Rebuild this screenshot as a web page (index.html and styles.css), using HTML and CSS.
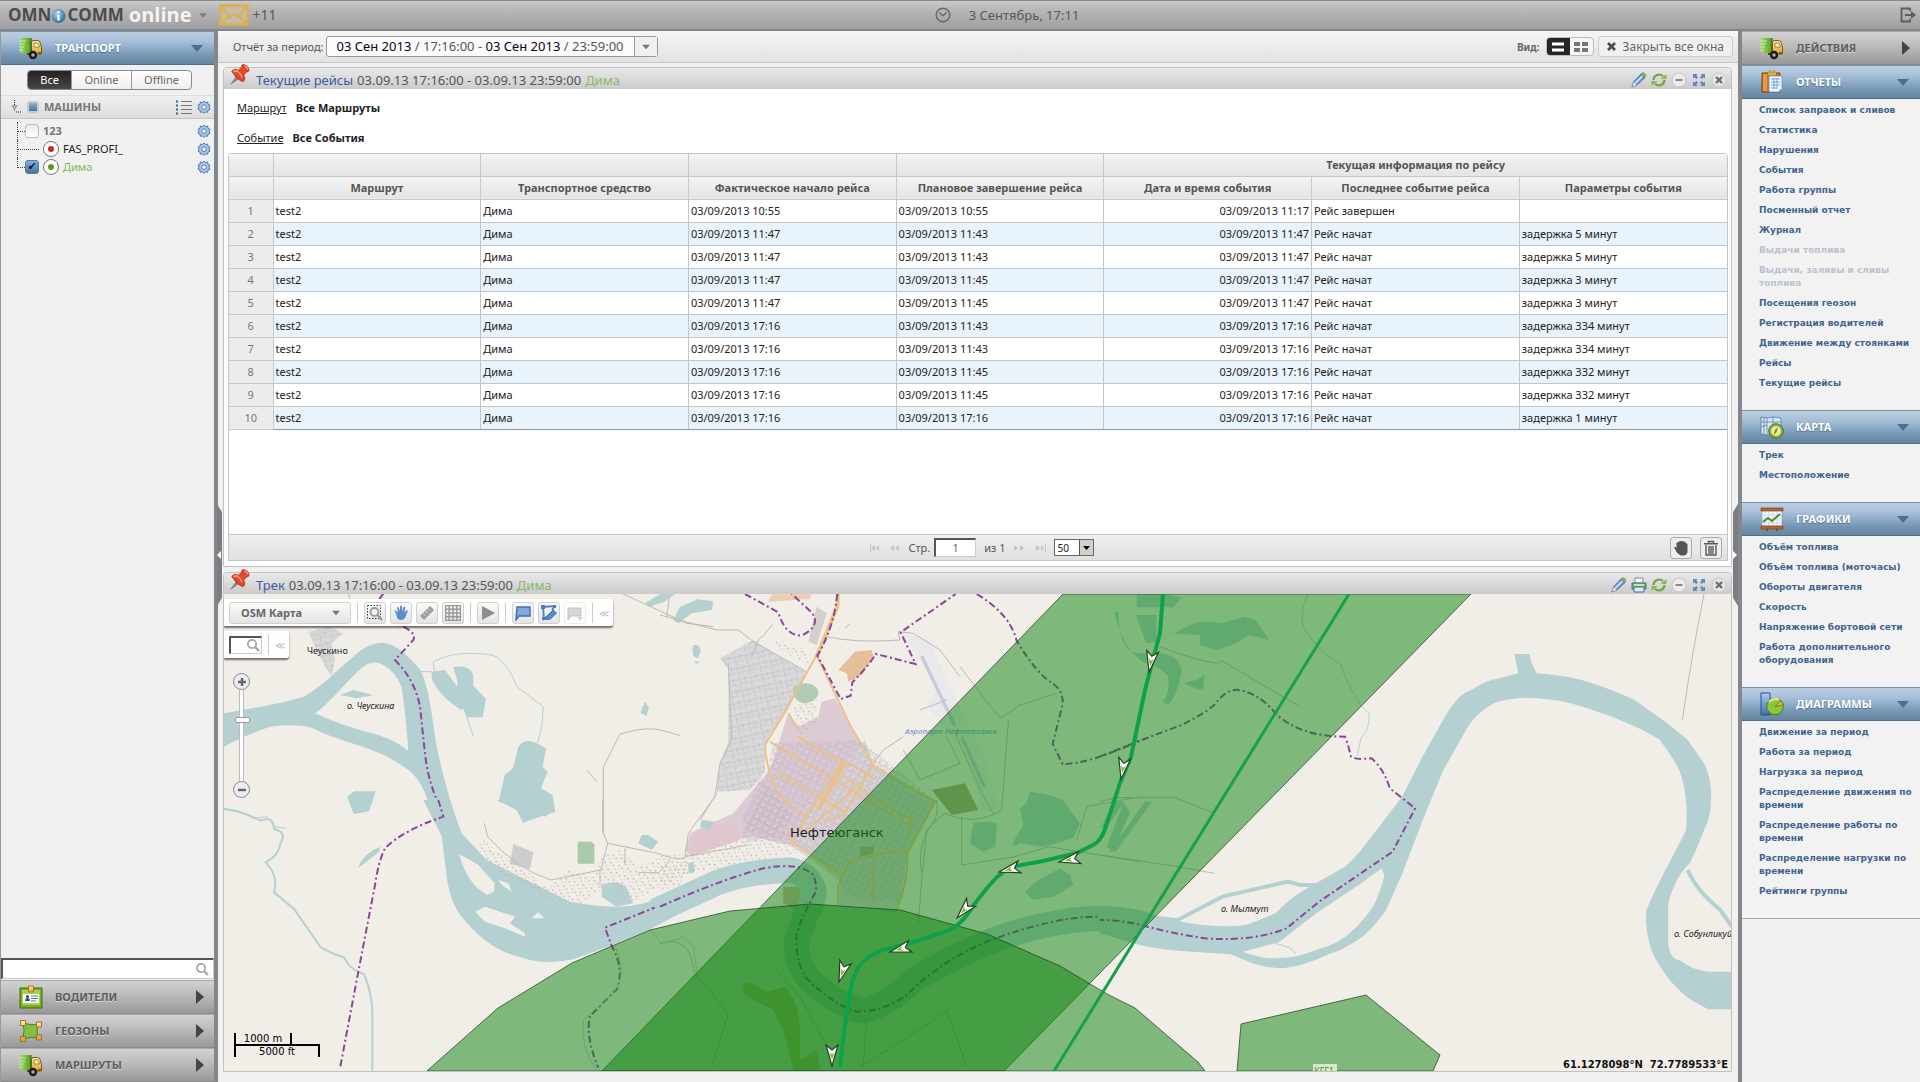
FILE: index.html
```html
<!DOCTYPE html>
<html lang="ru">
<head>
<meta charset="utf-8">
<title>Omnicomm Online</title>
<meta name="viewport" content="width=device-width, initial-scale=1">
<link rel="stylesheet" href="styles.css">
</head>
<body>
<svg class="defs" aria-hidden="true">
  <defs>
    <linearGradient id="gGreen" x1="0" x2="1"><stop offset="0" stop-color="#a5d96c"/><stop offset="1" stop-color="#4f9f22"/></linearGradient>
    <linearGradient id="gGold" x1="0" y1="0" x2="0" y2="1"><stop offset="0" stop-color="#ffe9a0"/><stop offset="1" stop-color="#e0a030"/></linearGradient>
    <linearGradient id="gBlue" x1="0" y1="0" x2="0" y2="1"><stop offset="0" stop-color="#a9cdf2"/><stop offset="1" stop-color="#3e6fae"/></linearGradient>
    <radialGradient id="gGlobe" cx=".4" cy=".35" r=".7"><stop offset="0" stop-color="#a6d4ef"/><stop offset="1" stop-color="#2c6390"/></radialGradient>
    <symbol id="truck" viewBox="0 0 24 24">
      <path d="M1 2h11v15H1z" fill="url(#gGreen)"/><path d="M0 5h7M0 8h6M0 11h5M0 14h4" stroke="#cdeaa8" stroke-width="1"/>
      <path d="M12 2v16" stroke="#2a5c0c" stroke-width="1"/>
      <path d="M12.500 6.500q0-2 2-2h4q2.500 0 3 3l1 4v6.500h-10z" fill="url(#gGold)" stroke="#7a5512"/>
      <path d="M15 7h4l1.500 4H15z" fill="#fff4cf" stroke="#8f6a20" stroke-width=".8"/>
      <path d="M8 18h4" stroke="#5b4313" stroke-width="2"/>
      <circle cx="14" cy="19" r="4.200" fill="#1c1c1c"/><circle cx="14" cy="19" r="1.800" fill="#aaa"/><path d="M19 16h4v2h-4z" fill="#8a5b10"/>
    </symbol>
    <symbol id="clip" viewBox="0 0 24 24">
      <path d="M2 3h18v19H2z" fill="#c5762a" stroke="#7b430f"/><path d="M3 4h4v17H3z" fill="#e39a4d"/>
      <path d="M8 2h8v4H8zM10 0h4v3h-4z" fill="url(#gGold)" stroke="#a8781c" stroke-width=".7"/>
      <path d="M9 6h13v13l-3 3H9z" fill="#eef5fd" stroke="#6a8db8" stroke-width=".8"/><path d="M11 9h9M11 12h9M11 15h9M11 18h6M14 8v11M17 8v11" stroke="#7aa3d4"/><path d="M22 19h-3v3z" fill="#9dbce0"/>
    </symbol>
    <symbol id="mapi" viewBox="0 0 24 24">
      <path d="M1 2l6 1 6-1 8 1v17l-7-1-7 1-6-1z" fill="#d7e6f7" stroke="#54789f" stroke-width=".8"/><path d="M7 3v17M13 2v17M1 7h20M4 2v17M1 12l6-2" stroke="#6d92bb" stroke-width="1"/>
      <circle cx="16" cy="16" r="7.300" fill="#7db52b" stroke="#48780d"/><circle cx="16" cy="16" r="5" fill="#dcebb0"/><path d="M18 12l-1.500 5-3 3 1.500-5z" fill="#c85c24"/>
    </symbol>
    <symbol id="chart" viewBox="0 0 24 24">
      <path d="M2 3h20v16H2z" fill="#f4f8fc" stroke="#8796a5" stroke-width=".6"/><path d="M5 4v15M9 4v15M13 4v15M17 4v15M2 8h20M2 12h20M2 16h20" stroke="#bcd0e4" stroke-width=".7"/>
      <path d="M1 1h22v3H1zM1 19h22v3H1z" fill="#b9662a" stroke="#71380f" stroke-width=".6"/><path d="M3 15l5-4 4 3 8-7" fill="none" stroke="#4c8d1b" stroke-width="2"/><path d="M7 22v2M17 22v2" stroke="#71380f" stroke-width="1.500"/>
    </symbol>
    <symbol id="pie" viewBox="0 0 24 24">
      <path d="M1 1h9v22H1z" fill="url(#gBlue)" stroke="#2b5285"/><circle cx="15" cy="14.500" r="8.300" fill="#8cc63a" stroke="#477a0d"/><path d="M15 14.500l6-5.500a8 8 0 0 1 2 4z" fill="#f7b84a" stroke="#477a0d" stroke-width=".8"/><path d="M9 10q5-5 10-2" stroke="#d3eb9c" fill="none" stroke-width="2"/>
    </symbol>
    <symbol id="badge" viewBox="0 0 24 24">
      <path d="M1 3h22v20H1z" fill="#79ae21" stroke="#3f6a08"/><path d="M3 5h18v15H3z" fill="#a5cf55"/><path d="M4 9h16v9H4z" fill="#fff"/><path d="M6 16q0-3 2.500-3t2.500 3zM8.500 10a1.600 1.600 0 1 1 0 3.200 1.600 1.600 0 1 1 0-3.200" fill="#33507a"/><path d="M12 11h7M12 13.500h7M12 16h5" stroke="#4b74a8"/><path d="M9.500 1h5v6h-5z" fill="url(#gGold)" stroke="#a8781c"/>
    </symbol>
    <symbol id="zone" viewBox="0 0 24 24">
      <path d="M4 4q8 3 16 1-4 7 0 14-8-2-16 1 2-9 0-16z" fill="#86bd45" stroke="#4d8519"/><g fill="url(#gGold)" stroke="#9d6a11" stroke-width=".9"><path d="M1.500 1.500h5v5h-5zM17.500 3h5v5h-5zM1.500 17.500h5v5h-5zM17.500 16h5v5h-5z"/></g>
    </symbol>
    <symbol id="gear" viewBox="0 0 14 14">
      <path d="M7 1l1.500 1.600L10.600 2l.4 2.300 2 1-1 1.900 1 2-2 .9-.4 2.200-2.100-.5L7 13.400l-1.500-1.600-2.200.5-.3-2.200-2-1 1-1.900-1-2 2-1L3.400 2l2.100.6z" fill="#a9c6ea" stroke="#4877b6"/><circle cx="7" cy="7.200" r="2.300" fill="#fff" stroke="#4877b6"/>
    </symbol>
    <symbol id="pin" viewBox="0 0 24 24">
      <path d="M2 22L9 12l3 3z" fill="#8c8c8c" stroke="#666" stroke-width=".6"/><path d="M3 8q4-4 7-1l4-4q-1-2 2-2.500 5 1 6 6-1 3-3 2l-3 4q3 4-1 7Q8 17 3 8z" fill="#e2492b" stroke="#ab2a12" stroke-width=".8"/><path d="M5 8.500q3-2 5 0 3 2 4 6M17 2q3 1 3.500 4" fill="none" stroke="#ff9c80" stroke-width="1.600"/>
    </symbol>
    <symbol id="pencil" viewBox="0 0 16 16"><path d="M1 15l1.500-5L10 2l4 3.500L6 13z" fill="#6e99d8" stroke="#35609e" stroke-width=".8"/><path d="M4 11.500L11.500 4" stroke="#d9e7fa" stroke-width="1.600"/><path d="M10 2l1.500-1.500q2 0 3.500 3L14 5.500z" fill="#8cc04a" stroke="#55852a" stroke-width=".6"/><path d="M1 15l1.500-5L6 13z" fill="#f1f1f1" stroke="#888" stroke-width=".6"/></symbol>
    <symbol id="refresh" viewBox="0 0 16 16"><path d="M2.500 8A5.500 5.500 0 0 1 12 4.300M13.500 8A5.500 5.500 0 0 1 4 11.700" fill="none" stroke="#6fa83c" stroke-width="2.200"/><path d="M9.500 7h6V2zM6.500 9h-6v5z" fill="#84bd48"/></symbol>
    <symbol id="printer" viewBox="0 0 16 16"><path d="M4 1h8v5H4z" fill="#fff" stroke="#6b8bb3"/><path d="M1 6h14v6H1z" fill="#7fb53e" stroke="#466f93"/><path d="M3 10h10v5H3z" fill="#dce9f8" stroke="#3f6ea8"/><path d="M3 8h10" stroke="#eaf6d9" stroke-width="1.400"/></symbol>
    <symbol id="minus" viewBox="0 0 16 16"><circle cx="8" cy="8" r="7" fill="#ececec" stroke="#c4c4c4"/><path d="M4.500 8h7" stroke="#8a8a8a" stroke-width="2"/></symbol>
    <symbol id="expand" viewBox="0 0 16 16"><g fill="#6487b8"><path d="M2 2h4.500L5.200 3.300 7 5.200 5.200 7 3.300 5.200 2 6.500zM14 2v4.500l-1.300-1.300L10.800 7 9 5.200l1.800-1.900L9.500 2zM2 14V9.500l1.300 1.300L5.200 9 7 10.800l-1.800 1.900L6.500 14zM14 14H9.500l1.300-1.300L9 10.800 10.800 9l1.900 1.800L14 9.500z"/></g></symbol>
    <symbol id="cross" viewBox="0 0 16 16"><circle cx="8" cy="8" r="7" fill="#e6e6e6" stroke="#c6c6c6"/><path d="M5 5l6 6M11 5l-6 6" stroke="#6c6c6c" stroke-width="2.400"/></symbol>
    <symbol id="hand" viewBox="0 0 16 16"><path d="M3 8.500L1.500 6q.8-1 2 0L5 8 4 2.500q1-1 1.800.2L7 6.500V1.200q1-1 2 0l.2 5.300L10.500 2q1.200-.8 1.800.3L11.500 8l1.800-2.500q1.400-.5 1.500.7L12 13q-1 2-4 2t-4-2.500z"/></symbol>
    <symbol id="fist" viewBox="0 0 16 16"><path d="M1 7q1.500-1 2.500 1V3q1-1.500 2-.6Q6.500.3 8.200 1.300q1.500-1 2.400.5 1.800-.8 2.100 1.200 2 0 1.800 2V12q-1 3.500-4 3.500h-2.500Q5.500 15 3.500 12z"/></symbol>
    <symbol id="trash" viewBox="0 0 16 16"><path d="M1 3.800h14M5.500 3.500v-2h5v2M3 5v10h10V5M6 6v8M8 6v8M10 6v8" fill="none" stroke="#5a5a5a" stroke-width="1.400"/></symbol>
    <symbol id="lens" viewBox="0 0 14 14"><circle cx="6" cy="6" r="4.200" fill="none" stroke="#a4a4a4" stroke-width="1.700"/><path d="M9 9l4 4" stroke="#a4a4a4" stroke-width="2.300"/></symbol>
    <symbol id="down" viewBox="0 0 12 7"><path d="M0 0h12L6 7z"/></symbol>
    <symbol id="right" viewBox="0 0 8 14"><path d="M0 0l8 7-8 7z" fill="#444"/></symbol>
    <symbol id="arrow" viewBox="-8 -24 16 26" overflow="visible"><path d="M0 0L-6-21l6 5 6-5z" fill="#fff" stroke="#25401f" stroke-width="1.200"/><path d="M0-6l-2.600-7.500L0-11.500l2.600-2z" fill="#7cb83a"/></symbol>
  </defs>
</svg>

<header class="topbar">
  <div class="brand">
    <button class="logo" type="button" aria-label="Omnicomm Online">
      <span class="logo-main">OMN</span><svg width="15" height="17" viewBox="0 0 15 17"><circle cx="7.500" cy="9" r="7" fill="url(#gGlobe)"/><path d="M7.500 4v2M7.500 7.500v6" stroke="#fff" stroke-width="2.200"/></svg><span class="logo-main">COMM</span><span class="logo-sub">online</span>
      <svg class="caret" width="8" height="5"><use href="#down"/></svg>
    </button>
    <a class="mail" href="#mail"><svg width="30" height="22" viewBox="0 0 30 22"><path d="M1.500 1.500h27v19h-27z" fill="#c3bda9" stroke="#deb146" stroke-width="2.400"/><path d="M2 2l9 11 4-3 4 3 9-11M2 20l9-8.500M28 20l-9-8.500" fill="none" stroke="#deb146" stroke-width="1.800"/></svg>+11</a>
  </div>
  <div class="clock"><svg width="16" height="16" viewBox="0 0 16 16" fill="none" stroke="#686868" stroke-width="1.500"><circle cx="8" cy="8" r="6.800"/><path d="M8 9L4.500 5.500M8 9l3.500-3.500"/></svg><time>3 Сентябрь, 17:11</time></div>
  <button class="exit" type="button" aria-label="Выход"><svg width="16" height="16" viewBox="0 0 16 16"><path d="M10 4V1.500H1.500v13H10V12" fill="none" stroke="#5c5c5c" stroke-width="1.800"/><path d="M5 7h6V4l5 4-5 4V9H5z" fill="#5c5c5c"/></svg></button>
</header>

<div class="layout">
  <aside class="left">
    <button class="acc blue" type="button"><svg class="ico"><use href="#truck"/></svg><span>ТРАНСПОРТ</span><svg class="tri"><use href="#down"/></svg></button>
    <div class="segment"><button class="on" type="button">Все</button><button type="button">Online</button><button type="button">Offline</button></div>
    <div class="group">
      <svg width="14" height="14" viewBox="0 0 14 14"><path d="M6.500 0v11M8 12h6" stroke="#222" stroke-dasharray="1 1"/><path d="M3 5h7l-3.500 6z" fill="#aaa"/></svg>
      <input type="checkbox" class="box mid" id="cars"><label for="cars">МАШИНЫ</label>
      <svg class="list" width="16" height="16" viewBox="0 0 16 16"><path d="M5 2.500h11M5 6.500h11M5 10.500h11M5 14.500h11" stroke="#777"/><path d="M0 2.500h2M0 6.500h2M0 10.500h2M0 14.500h2" stroke="#31619c" stroke-width="2"/></svg>
      <svg class="gear"><use href="#gear"/></svg>
    </div>
    <ul class="tree">
      <li><input type="checkbox" class="box" id="c123"><label class="muted" for="c123">123</label><svg class="gear"><use href="#gear"/></svg></li>
      <li class="nobox"><i class="dot red"></i><span>FAS_PROFI_</span><svg class="gear"><use href="#gear"/></svg></li>
      <li class="last"><input type="checkbox" class="box" id="dima" checked><i class="dot green"></i><label class="lime" for="dima">Дима</label><svg class="gear"><use href="#gear"/></svg></li>
    </ul>
    <div class="search"><input type="text" aria-label="Поиск"><svg width="14" height="14"><use href="#lens"/></svg></div>
    <button class="acc gray" type="button"><svg class="ico"><use href="#badge"/></svg><span>ВОДИТЕЛИ</span><svg class="side"><use href="#right"/></svg></button>
    <button class="acc gray" type="button"><svg class="ico"><use href="#zone"/></svg><span>ГЕОЗОНЫ</span><svg class="side"><use href="#right"/></svg></button>
    <button class="acc gray" type="button"><svg class="ico"><use href="#truck"/></svg><span>МАРШРУТЫ</span><svg class="side"><use href="#right"/></svg></button>
  </aside>

  <main class="center">
    <div class="period">
      <span>Отчёт за период:</span>
      <button class="range" type="button"><span class="range-text"><b>03 Сен 2013</b> / 17:16:00 - <b>03 Сен 2013</b> / 23:59:00</span><span class="range-drop"><svg width="8" height="6" fill="#777"><use href="#down"/></svg></span></button>
      <span class="view-label">Вид:</span>
      <div class="view"><button class="on" type="button" aria-label="Строки"><svg width="12" height="10"><path d="M0 2h12M0 8h12" stroke="#fff" stroke-width="3"/></svg></button><button type="button" aria-label="Плитка"><svg width="14" height="10"><path d="M0 2h6M8 2h6M0 8h6M8 8h6" stroke="#777" stroke-width="4"/></svg></button></div>
      <button class="close-all" type="button"><svg width="9" height="9"><path d="M1 1l7 7M8 1L1 8" stroke="#4a4a4a" stroke-width="2.600"/></svg>Закрыть все окна</button>
    </div>

    <section class="win report">
      <h2 class="title"><svg class="pin"><use href="#pin"/></svg><a href="#trips">Текущие рейсы</a><span>03.09.13 17:16:00 - 03.09.13 23:59:00</span><em>Дима</em>
        <span class="tools"><svg><use href="#pencil"/></svg><svg><use href="#refresh"/></svg><svg><use href="#minus"/></svg><svg><use href="#expand"/></svg><svg><use href="#cross"/></svg></span></h2>
      <div class="filters">
        <p><a href="#route">Маршрут</a><b>Все Маршруты</b></p>
        <p><a href="#event">Событие</a><b>Все События</b></p>
      </div>
      <div class="grid">
        <table>
          <colgroup><col class="num"><col><col><col><col><col><col><col></colgroup>
          <thead>
            <tr><th></th><th></th><th></th><th></th><th></th><th colspan="3">Текущая информация по рейсу</th></tr>
            <tr><th></th><th>Маршрут</th><th>Транспортное средство</th><th>Фактическое начало рейса</th><th>Плановое завершение рейса</th><th>Дата и время события</th><th>Последнее событие рейса</th><th>Параметры события</th></tr>
          </thead>
          <tbody>
            <tr><th>1</th><td>test2</td><td>Дима</td><td>03/09/2013 10:55</td><td>03/09/2013 10:55</td><td>03/09/2013 11:17</td><td>Рейс завершен</td><td></td></tr>
            <tr><th>2</th><td>test2</td><td>Дима</td><td>03/09/2013 11:47</td><td>03/09/2013 11:43</td><td>03/09/2013 11:47</td><td>Рейс начат</td><td>задержка 5 минут</td></tr>
            <tr><th>3</th><td>test2</td><td>Дима</td><td>03/09/2013 11:47</td><td>03/09/2013 11:43</td><td>03/09/2013 11:47</td><td>Рейс начат</td><td>задержка 5 минут</td></tr>
            <tr><th>4</th><td>test2</td><td>Дима</td><td>03/09/2013 11:47</td><td>03/09/2013 11:45</td><td>03/09/2013 11:47</td><td>Рейс начат</td><td>задержка 3 минут</td></tr>
            <tr><th>5</th><td>test2</td><td>Дима</td><td>03/09/2013 11:47</td><td>03/09/2013 11:45</td><td>03/09/2013 11:47</td><td>Рейс начат</td><td>задержка 3 минут</td></tr>
            <tr><th>6</th><td>test2</td><td>Дима</td><td>03/09/2013 17:16</td><td>03/09/2013 11:43</td><td>03/09/2013 17:16</td><td>Рейс начат</td><td>задержка 334 минут</td></tr>
            <tr><th>7</th><td>test2</td><td>Дима</td><td>03/09/2013 17:16</td><td>03/09/2013 11:43</td><td>03/09/2013 17:16</td><td>Рейс начат</td><td>задержка 334 минут</td></tr>
            <tr><th>8</th><td>test2</td><td>Дима</td><td>03/09/2013 17:16</td><td>03/09/2013 11:45</td><td>03/09/2013 17:16</td><td>Рейс начат</td><td>задержка 332 минут</td></tr>
            <tr><th>9</th><td>test2</td><td>Дима</td><td>03/09/2013 17:16</td><td>03/09/2013 11:45</td><td>03/09/2013 17:16</td><td>Рейс начат</td><td>задержка 332 минут</td></tr>
            <tr><th>10</th><td>test2</td><td>Дима</td><td>03/09/2013 17:16</td><td>03/09/2013 17:16</td><td>03/09/2013 17:16</td><td>Рейс начат</td><td>задержка 1 минут</td></tr>
          </tbody>
        </table>
      </div>
      <div class="pager">
        <div class="pages">
          <svg width="30" height="8" fill="#c4c4c4"><path d="M0 0h1v8H0zM5 1v6L1 4zM9 1v6L6 4zM24 1v6l-4-3zM29 1v6l-4-3z"/></svg>
          <label for="page">Стр.</label><input id="page" type="text" value="1"><span>из 1</span>
          <svg width="32" height="8" fill="#c4c4c4"><path d="M0 1v6l4-3zM6 1v6l4-3zM22 1v6l4-3zM27 1v6l3-3zM31 0h1v8h-1z"/></svg>
          <span class="size"><select aria-label="Строк на странице"><option>50</option></select><svg width="7" height="4"><use href="#down"/></svg></span>
        </div>
        <button type="button" aria-label="Перетащить"><svg fill="#555"><use href="#fist"/></svg></button>
        <button type="button" aria-label="Удалить"><svg><use href="#trash"/></svg></button>
      </div>
    </section>

    <section class="win track">
      <h2 class="title"><svg class="pin"><use href="#pin"/></svg><a href="#track">Трек</a><span>03.09.13 17:16:00 - 03.09.13 23:59:00</span><em>Дима</em>
        <span class="tools"><svg><use href="#pencil"/></svg><svg><use href="#printer"/></svg><svg><use href="#refresh"/></svg><svg><use href="#minus"/></svg><svg><use href="#expand"/></svg><svg><use href="#cross"/></svg></span></h2>
      <div class="map">
        <svg class="canvas" viewBox="224 594 1508 477" preserveAspectRatio="xMinYMin slice">
          <defs>
            <pattern id="blocks" width="20" height="20" patternUnits="userSpaceOnUse" patternTransform="rotate(28)"><path d="M0 3h13M0 11h20M5 3v8M14 11v9M0 17h9" stroke="#bdb2c0" stroke-width="2" fill="none"/></pattern>
            <pattern id="lots" width="34" height="34" patternUnits="userSpaceOnUse" patternTransform="rotate(-12)"><path d="M0 6h34M8 6v28M24 0v14M8 20h26" stroke="#bfbfc2" stroke-width="2" fill="none"/></pattern>
            <pattern id="houses" width="27" height="23" patternUnits="userSpaceOnUse" patternTransform="rotate(20)"><path d="M2 3h5v4H2zM14 8h4v5h-4zM4 15h3v2H4zM21 18h4v3h-4z" fill="#c2b1ad"/></pattern>
          </defs>
          <path class="land" d="M224 594h1508v478H224z"/>

          <!-- western reach -->
          <g transform="translate(220 560) scale(.33333)">
            <path d="M265 215l60-15 45 20-35 30 10 50-10 50-25-40-30-60z" fill="#d9d8d9"/><path d="M265 215l60-15 45 20-35 30 10 50-10 50-25-40-30-60z" fill="url(#lots)"/>
            <path class="water" d="M12 460C90 445 190 430 250 410c50-25 90-70 150-120 30-30 60-42 90-42 40 5 70 35 110 80 30 60 35 140 50 232 15 70 30 130 60 220h-70c-20-90-50-140-90-160-80-60-200-75-270-115q-45-15-130-5-60 20-138 60z"/>
            <path class="land" d="M285 460C330 430 400 340 430 320q30-20 55-8 45 25 60 70 12 80 20 190-50-40-120-55-80-20-160-57z"/>
            <path class="water" d="M360 405l40-15 60 15-50 10zM635 335l40-5 40 55 20 55-12 10q-70-45-88-95zM700 322q50-10 60 25l0 30 38 40-10 55-45 0-10-20q-30-40-20-85zM382 710l20-16 65 0-20 60-45 8zM895 560q20-30 55-10l28 15-10 55 15 15-20 50 35 20 8 50-90 30-40-50-40-10 18-80 25-20zM1275 425l12 20-8 23-18-10zM1420 260l20 5-5 30-12-8zM1275 130l40-25 50-5-35 25-40 15zM1390 140l40-22 48 5-5 25-55 5-40 35-15-10z"/>
            <path class="brook" d="M600 335l35 0 10 20-5-50q40-20 90-25 80 0 100 10 40 30 60 90l80 60-5 60-15 60M730 440l30 90M12 745q50 5 90 30l40-5 20 30 35 5"/>
            <path class="road" d="M385 100l5 20M1205 100l120 55 75 35 80 10M1350 100l-10 70M1200 522q80-25 130-10l50 15M1200 522l-50 100v200M1490 700l-50 80M1100 630l30 35" />
            <path class="edge" d="M490 100l-40 60 100 40q40 20 30 40l-55 60q60 60 75 140l15 140q10 100 60 190"/>
          </g>
          <g transform="translate(220 800) scale(.33333)">
            <path class="water" d="M610 0h80l20 60 15 40 75 80 120 60 130 65q80 15 150 15 60 0 110-25l130-60v73l-150 80-120 50-110 40q-90 20-170-10-80-20-150-100-50-50-60-140l-15-120z"/>
            <path class="water" d="M830 0l60 30 20 40 30-30 40 10 15-50zM385 0h75l-20 35-40 5zM415 205q10-40 65-65l-3 15zM1145 255q50-20 75 10l20 45-50 10-45-30zM1265 105h20l30 20-20 25-40-20z"/>
            <path class="land" d="M718 163l55 30 50 55 0 25-20 12q-60-30-85-120zM765 335l30-15 90 30-15 20 45 30 0 10-60-25-60-20zM935 355l20-18 18 18zM835 240l30 10 10 25-30-20z"/>
            <path d="M1073 125h40l10 8v58h-50z" fill="#a9cba9"/><path d="M880 132l60 25-10 50-60-15z" fill="#cfcccd"/>
            <path d="M780 110l60 50 60 40 80 60 60-50 80 20 20-60 60-20 60 50 80-40 60 10v50l-170 90-60-60-80 60-100-10-120-60-90-80z" fill="url(#houses)"/>
            <path class="brook wide" d="M12 27q50 5 110 35 40-15 40 25 40 10 20 40-5 40-45 60 40 40 25 90l60 50 80 115 40 20 30 10q20 40 60 50 25 60 25 120v170"/>
            <path class="road" d="M1148 0v95l15 35 150 30q50 20 80 15l47-60M1163 130l-20 80-150 30q-100-30-190-130l-10-40M1140 210v50M1215 145v50M1255 218h60l35-35"/>
            <path class="edge" d="M655 0l15 50q-120 40-175 95-20 40-30 110l-50 260-55 290M1440 268l-285 115 20 55q40 70 15 130l-80 80q-15 60 25 155"/>
            <path class="brook" d="M1290 390l35 40 40-10 25-10 30 30 15 100M1185 440q40 80-5 140l-90 80q-10 80 40 150"/>
          </g>

          <!-- city -->
          <g transform="translate(660 590) scale(.33333)">
            <path d="M180 205l100-55 60 40 100 55-60 120-65 100v80l-45 55-100 5 10-85 25-65V240z" fill="#d9d9dc"/><path d="M180 205l100-55 60 40 100 55-60 120-65 100v80l-45 55-100 5 10-85 25-65V240z" fill="url(#lots)"/>
            <path d="M385 370l30 40 60-30 10-45 40-10 80 140-50 65-110 200-40 40-130-30-100 20-80 40-20-20 15-50 130-60 50-60 60-70z" fill="#dccbd4"/>
            <path d="M555 520l60-70 25 75 120 70 65 35-80 150-20 120-20 70-90-20-75-5v-70l-50-40-100-70 60-110z" fill="#dbd5d9"/>
            <path d="M340 460l260-10 225 180-80 150-20 160-180-20v-70l-140-90-150-40 60-150z" fill="url(#blocks)"/>
            <path d="M300 560l100 120-60 60-90 20 0-80z" fill="url(#blocks)"/><path d="M100 730l130-40 10 60-150 50z" fill="#e2c6cd"/>
            <path d="M340 145l90 30 20 50-100-50zM400 350l70-30 0 80-50 40zM90 800l100-40 200-40 60 60-350 70-100 10zM0 830l80 0-20 60-60 10z" fill="url(#houses)"/>
            <path d="M400 290q50-25 75 10 5 30-40 40-40-5-35-50z" fill="#b0cdb3"/><path d="M535 240l50-55 50-5 5 20-35 55-40 20-5-25z" fill="#e5bf98"/>
            <path d="M325 35l10-22h120l-8 14z" fill="#edccb0"/><path d="M470 50l30 20-30 95-25-10z" fill="#d3cfca"/>
            <path d="M725 130l80 20 60 130 100 200 50 170-40 20-70-200-110-130 45-50z" fill="#e9e8ea"/><path d="M785 198l100 210M905 440l68 150" stroke="#c9c9dc" stroke-width="10"/>
            <path d="M815 600l100-20 40 80-80 15z" fill="#b2a787"/><path d="M600 770h40v30h-40z" fill="#aeb29a"/><path d="M370 890h60l-20 70-40-20z" fill="#c8b9a0"/>
            <path class="water" d="M100 165q20-5 22 20l-10 20q-20-5-12-40zM100 215h20l-8 6zM0 12h45l-30 22-15 5zM60 50l50-20 50 5-5 25-60 10-40 30-15-10z"/>
            <path class="water" d="M125 690l40 5-20 25-25-10zM85 820l15-5 5 30-20 5zM940 700q40-10 70 0 0 40-5 70l-35 15-40-25zM1100 640l10-35 60 10 40 15 20 30 30 40-20 45-90 25-70-10-20 10 0-15 30-50-10-50zM1095 905l40-35 65-35 30 20 10 30-60 35-60 10zM1390 640l-50 130 20 15 50-120z"/>
            <path d="M250 1180l30 0 40 25 60-15 30 60 10 60 0 100 50-30 10 60h-80l-30-120-30-60-60-30-30-20z" fill="#d5c08e"/>
            <path class="river" d="M-12 962l162-74q80-40 240-48 50 8 72 60-5 50-22 70-25 60-32 90 0 60 42 110 60 60 150 92 80-10 160-92 120-70 240-120 150-55 300-65 80 0 145 15"/>
            <path class="road" d="M0 75l170 45 65 0 45 35 160 90M340 100q-30 40-45 50l-20 50M500 140q90 20 220 10M720 150l-5-25 45 5 80 50 60 80M570 100l-15 15M900 230l120 155 60-40 110-35M205 220l10 230-35 70-15 100-80 110-10 70 190-35M640 520l30-40 60-40M830 630q10 60-30 90l-15 150-10 130M905 680v145l160-25 100-30 275 45M1045 390q-10 140-20 270-80 50-170 10-90 60-70 180M1250 750l30-100 160-30M340 1130l80 90 70 130M620 1280l-10 150M600 1430q200-120 260-170l60 170M0 1060q60-20 90 30l15 60 100 120-50 160M780 360l80-30M890 440l80 180 30 50M730 480l50 90 120-50-40-80"/>
            <path class="street" d="M470 195l-95 170-60 100q0 60 40 150l85 70M470 195l100 210 70 120 185 110-80 150q-90-5-175 30l-35 70v60M330 455l400 240M355 550l200 115M415 440q80 60 170 90l60 40M385 370l30 50M545 515l-150 240 150 100M640 525l-90 150-60 20M580 600l-140 120M550 560l180 120q40-10 10 60M640 800v140M740 780q10 80-30 180"/>
            <path class="street wide" d="M470 200l62-150 2-50M555 520l-80 140"/>
            <path class="edge" d="M255 12l100 55q20 70 70 70 60-30 30-70l-60-55M532 12q-10 100-60 185l70 130 30-10 5-40q50-50 70-85l120 30-45-95 165-115M950 12q100 60 120 140 60 100 110 130 30 20 28 60l-30 120 30 60q80 0 230-70"/>
            <path class="edge" d="M0 950q180-80 310-115 110-20 150 20 15 40 2 60-40 70-52 120-5 80 30 130 80 80 150 100 80 0 150-50 100-100 240-160 200-75 330-75 100 5 130 15"/>
          </g>

          <!-- eastern reach -->
          <g transform="translate(1100 590) scale(.40816 .33333)">
            <path class="water" d="M90 12q60-5 110 10l-20 30-90 0zM185 130q50-50 110-30l60-20 25 10 35 60-50-15-30 25-50 20-40-15 0-30-90-5zM88 75h50v80l-25 5zM45 65q0 120 50 125h50q50 5 55 50-10 80-35 105l-10-10q20-40 10-80-20-25-60-40-50-40-70-150zM205 280l30-10 22-15-5 45-20-5zM40 635h20l-40 70-20 10zM110 635h18l-90 150-15 0z"/>
            <path class="water" d="M0 955l110 10q70 30 140 40 90 10 120-5 40-20 60-30 40-50 70-70l100-70q20-20 40-50l100-160 50-120 60-130q30-60 60-70 30-25 50-30l65-20-10-58h37l5 25 13 33q60 5 110 20 70 25 130 60l80 70 50 50 40 70q20 50 17 110 0 50-17 90-15 50-35 100-25 30-35 60-20 50-18 80v100q5 50 28 50 30 30 70 35h58v113h-58q-30-20-50-35-40-40-60-80-30-50-35-90-10-50-7-90 20-60 42-110l55-130q5-60 0-100-5-50-15-80-20-50-50-95-40-30-90-55-80-40-150-60-60-10-90-10-60 5-80 20-40 30-60 70l-60 130-50 150-50 160-40 110q-30 50-60 80-50 40-80 50-70 40-120 42-50-5-80-22l-40-20q-60-5-120-10-60-5-110-20L0 1030z"/>
            <path class="land" d="M690 835l-50 45-110 90-90 85q-40 15-90 30 40 20 80 20 50 0 100-25 60-20 90-60 50-60 60-100 20-60 15-70z"/>
            <path class="brook" d="M430 1060q40 10 50 32"/>
            <path class="brook thick" d="M140 985l50 5 110-70 160-45 30 10 40 0M1440 840q20 60 80 120l28 50"/>
            <path class="brook" d="M510 12q-30 80 0 120 30 60 80 90 10 50 50 125l20 25q0 50-20 70l-10 55"/>
            <path class="road" d="M1480 12q-30 180-53 377M148 170q80 40 140 50l10-8 192 138M0 635l40-12h145l90 45M0 795l190 35 90 20"/>
            <path class="edge" d="M0 500q100-50 200-95 50-30 80-60 30-50 60-45 50 10 90 70 60 70 170 70 5 10 15 60 10 10 50 5 30 30 45 90l62 60-55 130-180 150-80 80q-80 40-200 30-80-15-140-35-60-20-117-20"/>
          </g>

          <text class="town" x="307" y="654">Чеускино</text>
          <text class="isle" x="347" y="709">о. Чеускина</text>
          <text class="isle" x="1221" y="912">о. Мылмут</text>
          <text class="isle" x="1674" y="937">о. Собунликуй</text>
          <text class="port" x="905" y="734">Аэропорт Нефтеюганск</text>
          <text class="city" x="790" y="837">Нефтеюганск</text>

          <path class="area" d="M1063 594h408L1004 1071H602z"/>
          <path class="area" d="M427 1071l10-9 61-54 74-45 78-33 80-19 80-7 90 6 87 24 73 32 47 28 28 14 63 54 7 9z"/>
          <path class="area" d="M1241 1024l125-29 74 60-7 16h-196z"/>
          <path d="M1313 1064h24v8h-24z" fill="#d3ecc6"/><text class="ref" x="1314" y="1074">КГГ1</text>
          <path class="line" d="M1349 594L1054 1071"/>
          <path class="trace" d="M1163 594l-3 39-15 57-14 67-11 26-13 40q-5 18-14 22l-16 8-34 8-33 6-13 10-10 11-14 18q-12 20-26 25l-30 10-37 10q-17 8-22 17l-6 14-7 43-5 42"/>
          <g>
            <use href="#arrow" width="16" height="26" x="-8" y="-24" transform="translate(1149 672) rotate(10)"/>
            <use href="#arrow" width="16" height="26" x="-8" y="-24" transform="translate(1121 779) rotate(10)"/>
            <use href="#arrow" width="16" height="26" x="-8" y="-24" transform="translate(1059 862) rotate(78)"/>
            <use href="#arrow" width="16" height="26" x="-8" y="-24" transform="translate(999 872) rotate(76)"/>
            <use href="#arrow" width="16" height="26" x="-8" y="-24" transform="translate(957 918) rotate(42)"/>
            <use href="#arrow" width="16" height="26" x="-8" y="-24" transform="translate(890 952) rotate(74)"/>
            <use href="#arrow" width="16" height="26" x="-8" y="-24" transform="translate(839 982) rotate(18)"/>
            <use href="#arrow" width="16" height="26" x="-8" y="-24" transform="translate(832 1066)"/>
          </g>
        </svg>

        <div class="maptools">
          <button class="source" type="button">OSM Карта<svg width="8" height="6" fill="#777"><use href="#down"/></svg></button><i></i>
          <button type="button" aria-label="Выделить"><svg viewBox="0 0 16 16"><path d="M.500.500h13v13H.500z" fill="none" stroke="#444" stroke-dasharray="1.500 1.500"/><circle cx="7.500" cy="7" r="4" fill="none" stroke="#999" stroke-width="1.800"/><path d="M10.500 10l4.500 5" stroke="#999" stroke-width="2.400"/></svg></button>
          <button type="button" aria-label="Двигать"><svg fill="#5b8ccb"><use href="#hand"/></svg></button>
          <button type="button" aria-label="Линейка"><svg viewBox="0 0 16 16"><path d="M1 11L11 1l4 4L5 15z" fill="#9c9c9c"/><path d="M4 8.500l2 2M6.500 6l2 2M9 3.500l2 2" stroke="#eee"/></svg></button>
          <button type="button" aria-label="Сетка"><svg viewBox="0 0 16 16"><path d="M.500.500h15v15H.500zM4.200 0v16M8 0v16M11.800 0v16M0 4.200h16M0 8h16M0 11.800h16" fill="none" stroke="#999" stroke-width="1.500"/></svg></button><i></i>
          <button type="button" aria-label="Пуск"><svg viewBox="0 0 16 16"><path d="M2 1l13 7-13 7z" fill="#8d8d8d"/></svg></button><i></i>
          <button type="button" aria-label="Область"><svg viewBox="0 0 16 16"><path d="M2 2h13v9L4 11l-3 4z" fill="#7ea9e0" stroke="#3f6db0" stroke-width="1.400"/></svg></button>
          <button type="button" aria-label="Править"><svg viewBox="0 0 16 16"><path d="M1 2l13-1-3 4M2 2l1 12 4-3" fill="none" stroke="#4d7dc0" stroke-width="1.800"/><path d="M6 11l6-6 3.500 3-6 6-4 .500z" fill="#5b8ccb" stroke="#3f6db0"/><path d="M0 0h4v4H0zM12 0h3v3h-3zM1 12h4v3H1z" fill="#4d7dc0"/></svg></button>
          <button class="off" type="button" aria-label="Добавить"><svg viewBox="0 0 16 16"><path d="M1 3h13v8H4l-3 4zM10 13h6M13 10v6" fill="#d6d6d6" stroke="#c4c4c4"/></svg></button><i></i>
          <span class="fold">≪</span>
        </div>
        <div class="mapsearch"><input type="text" aria-label="Поиск на карте"><svg width="14" height="14"><use href="#lens"/></svg><i></i><span class="fold">≪</span></div>
        <div class="zoomer"><button type="button" aria-label="Ближе"><svg viewBox="0 0 10 10"><path d="M5 1v8M1 5h8" stroke="#666" stroke-width="2.400"/></svg></button><span class="rail"></span><button type="button" aria-label="Дальше"><svg viewBox="0 0 10 10"><path d="M1 5h8" stroke="#666" stroke-width="2.400"/></svg></button></div>
        <div class="scale"><span class="m">1000 m</span><span class="ft">5000 ft</span></div>
        <div class="coords">61.1278098°N&nbsp; 72.7789533°E</div>
      </div>
    </section>
    <span class="handle west"></span><span class="handle east"></span>
  </main>

  <aside class="rightbar">
    <button class="acc gray" type="button"><svg class="ico"><use href="#truck"/></svg><span>ДЕЙСТВИЯ</span><svg class="side"><use href="#right"/></svg></button>
    <button class="acc blue" type="button"><svg class="ico"><use href="#clip"/></svg><span>ОТЧЕТЫ</span><svg class="tri"><use href="#down"/></svg></button>
    <ul class="menu">
      <li><a href="#r1">Список заправок и сливов</a></li><li><a href="#r2">Статистика</a></li><li><a href="#r3">Нарушения</a></li><li><a href="#r4">События</a></li><li><a href="#r5">Работа группы</a></li><li><a href="#r6">Посменный отчет</a></li><li><a href="#r7">Журнал</a></li><li class="dim">Выдачи топлива</li><li class="dim">Выдачи, заливы и сливы топлива</li><li><a href="#r8">Посещения геозон</a></li><li><a href="#r9">Регистрация водителей</a></li><li><a href="#r10">Движение между стоянками</a></li><li><a href="#r11">Рейсы</a></li><li><a href="#r12">Текущие рейсы</a></li>
    </ul>
    <button class="acc blue" type="button"><svg class="ico"><use href="#mapi"/></svg><span>КАРТА</span><svg class="tri"><use href="#down"/></svg></button>
    <ul class="menu"><li><a href="#m1">Трек</a></li><li><a href="#m2">Местоположение</a></li></ul>
    <button class="acc blue" type="button"><svg class="ico"><use href="#chart"/></svg><span>ГРАФИКИ</span><svg class="tri"><use href="#down"/></svg></button>
    <ul class="menu"><li><a href="#g1">Объём топлива</a></li><li><a href="#g2">Объём топлива (моточасы)</a></li><li><a href="#g3">Обороты двигателя</a></li><li><a href="#g4">Скорость</a></li><li><a href="#g5">Напряжение бортовой сети</a></li><li><a href="#g6">Работа дополнительного оборудования</a></li></ul>
    <button class="acc blue" type="button"><svg class="ico"><use href="#pie"/></svg><span>ДИАГРАММЫ</span><svg class="tri"><use href="#down"/></svg></button>
    <ul class="menu"><li><a href="#d1">Движение за период</a></li><li><a href="#d2">Работа за период</a></li><li><a href="#d3">Нагрузка за период</a></li><li><a href="#d4">Распределение движения по времени</a></li><li><a href="#d5">Распределение работы по времени</a></li><li><a href="#d6">Распределение нагрузки по времени</a></li><li><a href="#d7">Рейтинги группы</a></li></ul>
  </aside>
</div>
</body>
</html>
```
FILE: styles.css
```css
* { box-sizing: border-box; }
body { margin: 0; height: 100vh; min-height: 1000px; display: flex; flex-direction: column; background: #f1f1f1; font: 11px/14px "Noto Sans", "Open Sans", sans-serif; color: #222; overflow: hidden; }
button, input, select { font: inherit; color: inherit; margin: 0; padding: 0; }
button { border: 0; background: none; cursor: pointer; }
a { color: inherit; text-decoration: none; }
ul { list-style: none; margin: 0; padding: 0; }
svg { display: block; flex: none; }
.defs { position: absolute; width: 0; height: 0; }

.topbar { flex: none; height: 31px; display: grid; grid-template-columns: 1fr auto 1fr; align-items: center; background: linear-gradient(#cacaca, #b8b8ba 30%, #9f9fa1); border-top: 1px solid #888; border-bottom: 2px solid #858585; color: #585858; font-size: 13px; }
.brand { display: flex; align-items: center; }
.logo { display: flex; align-items: center; padding-left: 8px; height: 28px; font-family: "Open Sans", sans-serif; font-weight: 700; line-height: 28px; }
.logo svg { margin-right: 1px; }
.logo-main { font-size: 17px; color: #4c4c4e; }
.logo-sub { font-size: 20px; color: #f4f4f0; margin-left: 5px; }
.logo .caret { fill: #7d7d7d; margin: 0 0 0 7px; }
.mail { display: flex; align-items: center; gap: 4px; margin-left: 12px; font-size: 14px; }
.clock { display: flex; align-items: center; gap: 18px; padding-left: 94px; }
.exit { justify-self: end; margin-right: 4px; }

.layout { flex: 1; min-height: 0; display: grid; grid-template-columns: 218px minmax(0, 1fr) 182px; }
.left { display: flex; flex-direction: column; border-right: 4px solid #85868a; border-left: 1px solid #999; background: #f0f0f0; }
.rightbar { border-left: 4px solid #85868a; background: #f0f0f0; }

.acc { flex: none; width: 100%; height: 34px; display: flex; align-items: center; padding: 0 10px 0 18px; font-size: 11px; font-weight: 700; text-align: left; }
.acc .ico { width: 24px; height: 24px; margin-right: 12px; }
.acc span { flex: 1; }
.acc.blue { background: linear-gradient(#bccfe2, #a6bfd8 30%, #7495b2 75%, #64869f); border-top: 1px solid #7291ae; border-bottom: 1px solid #4f6e8a; color: #fff; text-shadow: 0 1px 1px #4b6b8c; }
.acc.gray { background: linear-gradient(#d2d2d2, #bdbdbd 40%, #999); border-top: 1px solid #a9a9a9; border-bottom: 1px solid #8b8b8b; color: #5d5d5d; text-shadow: 0 1px 0 #ddd; }
.tri { width: 14px; height: 7px; fill: #4b6f92; }
.side { width: 8px; height: 14px; }

.segment { display: flex; margin: 5px auto 5px 26px; border: 1px solid #888; border-radius: 4px; overflow: hidden; background: linear-gradient(#fff, #eee); }
.segment button { height: 18px; width: 60px; color: #666; border-left: 1px solid #999; }
.segment button.on { width: 43px; background: linear-gradient(#222, #484848); color: #fff; border: 0; }
.group { height: 24px; display: flex; align-items: center; padding: 0 3px 0 7px; gap: 5px; border-top: 1px solid #ddd; border-bottom: 1px solid #c4c4c4; background: linear-gradient(#efefef, #ddd); color: #777; font-weight: 700; }
.group label { flex: 1; }
.gear { width: 14px; height: 14px; }
.box { appearance: none; flex: none; width: 14px; height: 14px; border: 1px solid #bbb; border-radius: 3px; background: linear-gradient(#e8e8e8, #fff); }
.box.mid { width: 12px; height: 12px; border: 2px solid #c3cbd3; background: linear-gradient(#8fb0cf, #4a749c); }
.box:checked { border-color: #557ea5; background: #5f8bb5 linear-gradient(#87aed3, #47729c); position: relative; }
.box:checked::after { content: "✔"; position: absolute; inset: 0; font: 11px/12px "DejaVu Sans", sans-serif; text-align: center; color: #0c2137; }
.tree { flex: 1; padding: 3px 3px 0 16px; }
.tree li { height: 18px; display: flex; align-items: center; gap: 4px; position: relative; padding-left: 8px; }
.tree li::before { content: ""; position: absolute; left: 0; top: 0; width: 7px; height: 9px; border-left: 1px dotted #444; border-bottom: 1px dotted #444; }
.tree li:not(.last)::after { content: ""; position: absolute; left: 0; top: 9px; height: 9px; border-left: 1px dotted #444; }
.tree li.nobox { padding-left: 26px; }
.tree li.nobox::before { width: 21px; }
.tree .gear { margin-left: auto; }
.muted { color: #777; font-weight: 700; }
.lime { color: #7fb962; }
.dot { flex: none; width: 16px; height: 16px; border: 1px solid #777; border-radius: 50%; background: #fff; }
.dot::after { content: ""; display: block; width: 6px; height: 6px; margin: 4px; border-radius: 50%; }
.dot.red::after { background: #cc2a18; }
.dot.green::after { background: #539b1c; }
.search { position: relative; margin-bottom: 1px; }
.search input { width: 100%; height: 21px; display: block; border: 1px solid #ccc; border-top: 2px solid #555; border-left: 2px solid #555; background: #fff; padding: 0 22px 0 4px; }
.search svg { position: absolute; right: 5px; top: 4px; }

.center { position: relative; display: flex; flex-direction: column; padding: 0 6px 10px 5px; min-width: 0; }
.period { flex: none; height: 32px; margin: 0 -6px 0 -5px; padding: 0 5px 0 15px; display: flex; align-items: center; border-bottom: 1px solid #c8c8c8; background: linear-gradient(#f6f6f6, #e2e2e2); color: #555; }
.range { display: flex; align-items: stretch; height: 21px; margin-left: 2px; border: 1px solid #999; border-radius: 3px; background: #fbfbfb; font-size: 13px; color: #555; }
.range b { font-weight: 400; color: #102; }
.range-text { width: 308px; line-height: 19px; text-align: center; border-right: 1px solid #999; }
.range-drop { width: 22px; display: grid; place-items: center; background: #f0f0f0; }
.view-label { margin-left: auto; font-size: 10px; font-weight: 700; color: #666; }
.view { display: flex; margin: 0 4px 0 6px; border: 1px solid #bbb; border-radius: 4px; overflow: hidden; background: #f5f5f5; }
.view button { width: 23px; height: 17px; display: grid; place-items: center; }
.view .on { background: #262626; }
.close-all { height: 21px; padding: 0 8px; display: flex; align-items: center; gap: 7px; border: 1px solid #ccc; border-radius: 3px; background: #f0f0f0; font-size: 12px; color: #666; }

.win { border: 1px solid #c2c2c2; border-radius: 4px 4px 0 0; background: #fff; display: flex; flex-direction: column; }
.report { flex: none; height: 500px; margin-top: 4px; }
.track { flex: 1; min-height: 0; margin-top: 5px; }
.title { position: relative; flex: none; height: 21px; margin: 0; padding: 2px 4px 0 32px; display: flex; align-items: center; gap: 4px; font-size: 13px; font-weight: 400; color: #555; border-radius: 4px 4px 0 0; background: linear-gradient(#e9e9e9, #cbcbcb); }
.title a { color: #3b5d9c; }
.title em { font-style: normal; color: #85bb6a; }
.pin { position: absolute; left: 5px; top: -4px; width: 22px; height: 22px; }
.tools { margin-left: auto; display: flex; gap: 4px; }
.tools svg { width: 16px; height: 16px; }
.filters { padding: 12px 13px 0; }
.filters p { margin: 0 0 16px; display: flex; gap: 9px; }
.filters a { text-decoration: underline; }
.grid { flex: 1; margin: -8px 3px 0 4px; border: 1px solid #c4c4c4; border-bottom: 0; border-radius: 4px 4px 0 0; }
table { width: 100%; border-collapse: collapse; table-layout: fixed; }
.num { width: 44px; }
th, td { height: 23px; padding: 0 2px; border: 1px solid #c0c6cc; text-align: left; white-space: nowrap; }
tr > :first-child { border-left: 0; }
tr > :last-child { border-right: 0; }
thead tr:first-child th { border-top: 0; height: 22px; }
th { background: linear-gradient(#f3f3f3, #e4e4e4); color: #555; text-align: center; border-color: #c8c8c8; }
tbody th { font-weight: 400; color: #777; background: #ececec; }
tbody tr:nth-child(even) td { background: #e9f3fc; }
tbody tr:last-child td { border-top-color: #8e949c; border-bottom-color: #8e949c; }
td:nth-child(6) { text-align: right; }
.pager { flex: none; height: 27px; margin: 0 3px 5px 4px; padding: 0 5px; display: flex; align-items: center; gap: 8px; border: 1px solid #c4c4c4; background: linear-gradient(#efefef, #e0e0e0); color: #555; }
.pages { flex: 1; display: flex; align-items: center; justify-content: center; gap: 8px; padding-left: 68px; }
.pages input { width: 42px; height: 19px; margin-left: -4px; border: 1px solid #ccc; border-top: 2px solid #555; border-left: 2px solid #555; background: #fff; text-align: center; font-size: 10px; }
.size { position: relative; }
.size select { appearance: none; display: block; width: 40px; height: 17px; padding-left: 3px; border: 1px solid #666; border-radius: 0; background: linear-gradient(90deg, #fff 24px, #555 24px, #555 25px, #d4d0c8 25px); color: #222; font-size: 10px; line-height: 14px; }
.size svg { position: absolute; right: 4px; top: 7px; fill: #000; pointer-events: none; }
.pager button { width: 22px; height: 22px; display: grid; place-items: center; border: 1px solid #aaa; border-radius: 3px; background: #ededed; }
.pager button svg { width: 16px; height: 16px; }

.map { position: relative; flex: 1; min-height: 0; overflow: hidden; background: #f2efe9; }
.canvas { width: 100%; height: 100%; }
.land { fill: #f1eee8; }
.water { fill: #b5d0d0; }
.river { fill: none; stroke: #b5d0d0; stroke-width: 76; }
.brook { fill: none; stroke: #b5d0d0; stroke-width: 1; vector-effect: non-scaling-stroke; }
.brook.wide { stroke-width: 2px; }
.brook.thick { stroke-width: 4px; }
.road { fill: none; stroke: #bdb9b5; stroke-width: 1; vector-effect: non-scaling-stroke; }
.street { fill: none; stroke: #ebc185; stroke-width: 2px; vector-effect: non-scaling-stroke; }
.street.wide { stroke-width: 4px; }
.edge { fill: none; stroke: #8a4798; stroke-width: 2px; stroke-dasharray: 7 3 2 3; vector-effect: non-scaling-stroke; }
.area { fill: rgb(12 132 14 / .5); stroke: rgb(30 60 30 / .7); stroke-width: 1; }
.trace { fill: none; stroke: #0da24a; stroke-width: 4; stroke-linejoin: round; }
.line { fill: none; stroke: #16a04b; stroke-width: 3; }
.canvas text { fill: #1c1c1c; font-family: "Noto Sans", sans-serif; font-size: 9px; }
.canvas .isle { font-style: italic; }
.canvas .port { font-style: italic; font-size: 8px; fill: #6690cc; }
.canvas .city { font-family: "DejaVu Sans", sans-serif; font-size: 13px; }
.canvas .ref { fill: #4b7f42; }

.maptools, .mapsearch { position: absolute; left: 0; display: flex; align-items: center; background: rgb(255 255 255 / .93); box-shadow: 0 2px 2px rgb(0 0 0 / .55); border-radius: 0 3px 3px 0; }
.maptools { top: 5px; height: 27px; padding: 0 4px 0 5px; gap: 4px; }
.maptools button { width: 22px; height: 22px; display: grid; place-items: center; border: 1px solid #d0d0d0; border-radius: 3px; background: linear-gradient(#fafafa, #e4e4e4); }
.maptools button svg { width: 16px; height: 16px; }
.maptools .source { width: 122px; display: flex; justify-content: space-between; align-items: center; padding: 0 10px 0 11px; font-weight: 700; color: #666; }
.maptools .source svg { width: 8px; height: 6px; }
.maptools .off { border-color: #eee; background: none; }
.maptools i, .mapsearch i { width: 1px; height: 20px; margin: 0 2px; background: #ccc; }
.fold { color: #bbb; font-size: 10px; }
.mapsearch { top: 37px; height: 27px; padding: 0 4px 0 5px; gap: 4px; }
.mapsearch input { width: 33px; height: 18px; border: 1px solid #ccc; border-top: 2px solid #555; border-left: 2px solid #555; background: #fff; }
.mapsearch svg { position: absolute; left: 22px; top: 7px; }
.zoomer { position: absolute; left: 9px; top: 79px; display: flex; flex-direction: column; align-items: center; }
.zoomer button { width: 17px; height: 17px; display: grid; place-items: center; border: 1px solid #888; border-radius: 50%; background: #ececec; }
.zoomer button svg { width: 10px; height: 10px; }
.rail { position: relative; width: 5px; height: 91px; border: 1px solid #bbb; border-width: 0 1px; background: #fff; }
.rail::after { content: ""; position: absolute; left: -5px; top: 27px; width: 13px; height: 4px; border: 1px solid #999; border-radius: 2px; background: #fff; }
.scale { position: absolute; left: 10px; bottom: 14px; display: flex; flex-direction: column; font: 10px/11px "DejaVu Sans", sans-serif; color: #000; text-align: center; }
.scale .m { width: 58px; border: solid #000; border-width: 0 2px; }
.scale .ft { width: 86px; height: 13px; border: 2px solid #000; border-bottom: 0; }
.coords { position: absolute; right: 3px; bottom: 0; font: 700 10px/12px "DejaVu Sans", sans-serif; color: #111; }
.handle { position: absolute; top: 473px; width: 5px; height: 102px; background: #7b7d82; }
.handle.west { left: -1px; clip-path: polygon(0 0, 100% 8%, 100% 92%, 0 100%); }
.handle.east { right: 0; clip-path: polygon(100% 0, 0 8%, 0 92%, 100% 100%); }
.handle::after { content: ""; position: absolute; top: 47px; left: 0; border: 4px solid transparent; border-width: 4px 4px 4px 0; border-right-color: #fff; }
.handle.east::after { border-width: 4px 0 4px 4px; border-left-color: #fff; }

.menu { padding: 5px 3px 20px 17px; display: flex; flex-direction: column; gap: 7px; font: 700 9px/13px "DejaVu Sans", sans-serif; color: #41648f; background: #f2f2f2; }
.menu:last-child { border-bottom: 1px solid #aaa; }
.dim { color: #b9c3ce; }
```
